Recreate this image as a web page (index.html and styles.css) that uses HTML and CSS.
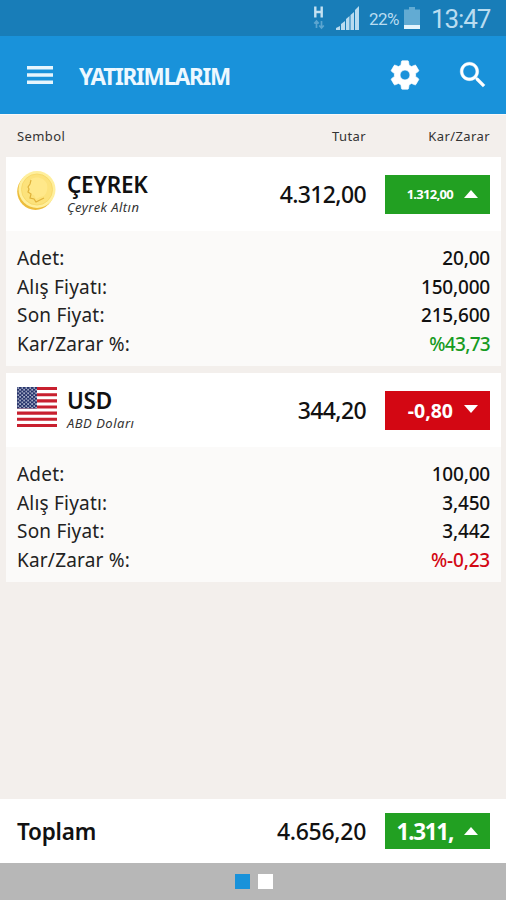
FILE: index.html
```html
<!DOCTYPE html>
<html lang="tr">
<head>
    <meta charset="UTF-8">
    <title>Yatırımlarım</title>
    <link rel="stylesheet" href="styles.css">
</head>
<body>
    <div class="status">
        <svg class="network" width="12" height="24" viewBox="0 0 12 24">
            <path d="M2.300 .5v11M8.700 .5v11M2.300 6h6.400" fill="none" stroke="#c3e1f2" stroke-width="2.400"/>
            <path d="M3.500 22v-7M1.200 17.500l2.300-2.500 2.300 2.500M8.500 15v7M6.200 19.500l2.300 2.500 2.300-2.500" fill="none" stroke="#5ba5d0" stroke-width="1.700"/>
        </svg>
        <svg class="signal" width="23" height="24" viewBox="0 0 23 24">
            <path d="M0 24v-2l4-2v4zM5 24v-6l4-3v9zM10 24V13l3.500-3v14zM14.500 24V9L18 6v18zM19 24V4l4-4v24z" fill="#b9dbef"/>
        </svg>
        <span class="percent">22%</span>
        <svg class="battery" width="16" height="22" viewBox="0 0 16 22">
            <path d="M0 2.500h5V0h6v2.500h5V18H0z" fill="#62abd3"/>
            <path d="M0 18h16v4H0z" fill="#e4f4fc"/>
        </svg>
        <span class="clock">13:47</span>
    </div>

    <div class="toolbar">
        <svg class="menu" width="26" height="18" viewBox="0 0 26 18">
            <path d="M0 1.700h26M0 9h26M0 16.300h26" stroke="#e6f5fd" stroke-width="3.400"/>
        </svg>
        <h1>YATIRIMLARIM</h1>
        <svg class="gear" width="34" height="34" viewBox="0 0 24 24" fill="#fff" stroke="#fff" stroke-width=".5">
            <path d="M19.430 12.980c.04-.32.07-.64.07-.98s-.03-.66-.07-.98l2.110-1.650c.19-.15.24-.42.12-.64l-2-3.460c-.12-.22-.39-.3-.61-.22l-2.490 1c-.52-.4-1.080-.73-1.690-.98l-.38-2.650C14.460 2.180 14.250 2 14 2h-4c-.25 0-.46.18-.49.42l-.38 2.650c-.61.25-1.170.59-1.690.98l-2.490-1c-.23-.09-.49 0-.61.22l-2 3.460c-.13.22-.07.49.12.64l2.110 1.650c-.04.32-.07.65-.07.98s.03.66.07.98l-2.110 1.650c-.19.15-.24.42-.12.64l2 3.460c.12.22.39.3.61.22l2.490-1c.52.4 1.080.73 1.690.98l.38 2.650c.03.24.24.42.49.42h4c.25 0 .46-.18.49-.42l.38-2.650c.61-.25 1.170-.59 1.690-.98l2.490 1c.23.09.49 0 .61-.22l2-3.460c.12-.22.07-.49-.12-.64l-2.110-1.650zM12 15.500c-1.930 0-3.500-1.570-3.500-3.500s1.570-3.500 3.500-3.500 3.500 1.570 3.500 3.500-1.570 3.500-3.500 3.500z"/>
        </svg>
        <svg class="search" width="34" height="34" viewBox="0 0 24 24" fill="#fff" stroke="#fff" stroke-width=".3">
            <path d="M15.500 14h-.79l-.28-.27C15.410 12.590 16 11.110 16 9.500 16 5.910 13.090 3 9.500 3S3 5.910 3 9.500 5.910 16 9.500 16c1.610 0 3.090-.59 4.230-1.570l.27.28v.79l5 4.990L20.490 19l-4.990-5zm-6 0C7.010 14 5 11.990 5 9.500S7.010 5 9.500 5 14 7.010 14 9.500 11.990 14 9.500 14z"/>
        </svg>
    </div>

    <div class="columns">
        <span class="col-name">Sembol</span>
        <span class="col-amount">Tutar</span>
        <span class="col-profit">Kar/Zarar</span>
    </div>

    <div class="card">
        <div class="card-head">
            <svg class="icon" width="40" height="40" viewBox="0 0 40 40">
                <ellipse cx="18.500" cy="20.500" rx="18.300" ry="18.500" fill="#edbd3c"/>
                <circle cx="20" cy="18.500" r="18.500" fill="#ffef9c"/>
                <circle cx="20" cy="18.500" r="15.500" fill="#fce27b" stroke="#f8da6c"/>
                <path d="M14 8c5-3 13-2 16 5 1 5 0 9-3 12l-4 1-4 2-2-4-5-1 1-4-3-2 2-3z" fill="#ffe88a"/>
                <path d="M14 9l-1 4-2 3 1 2-1 3 3 2-1 4 4 1 2 3 4-2 4-2" fill="none" stroke="#e0b23a" stroke-width="1.200"/>
            </svg>
            <div class="name">
                <h2 class="symbol">ÇEYREK</h2>
                <p class="sub sub-gold">Çeyrek Altın</p>
            </div>
            <span class="amount">4.312,00</span>
            <div class="badge up"><span class="small">1.312,00</span><i class="arrow-up"></i></div>
        </div>
        <div class="details">
            <div class="row"><span>Adet:</span><b>20,00</b></div>
            <div class="row"><span>Alış Fiyatı:</span><b>150,000</b></div>
            <div class="row"><span>Son Fiyat:</span><b>215,600</b></div>
            <div class="row"><span>Kar/Zarar %:</span><b class="gain">%43,73</b></div>
        </div>
    </div>

    <div class="card">
        <div class="card-head">
            <svg class="icon" width="40" height="40" viewBox="0 0 40 40">
                <defs>
                    <pattern id="stars" width="4" height="3.600" patternUnits="userSpaceOnUse">
                        <circle cx="1.200" cy="1" r=".85" fill="#cfd4e4"/>
                        <circle cx="3.100" cy="2.700" r=".85" fill="#cfd4e4"/>
                    </pattern>
                </defs>
                <path d="M0 0h40v40H0z" fill="#fff"/>
                <path d="M0 1.540h40M0 7.690h40M0 13.850h40M0 20h40M0 26.150h40M0 32.310h40M0 38.460h40" stroke="#c8202f" stroke-width="3.080"/>
                <path d="M0 0h20v21.500H0z" fill="#27346b"/>
                <path d="M0 0h20v21.500H0z" fill="url(#stars)"/>
            </svg>
            <div class="name">
                <h2 class="symbol">USD</h2>
                <p class="sub">ABD Doları</p>
            </div>
            <span class="amount">344,20</span>
            <div class="badge down"><span class="medium">-0,80</span><i class="arrow-down"></i></div>
        </div>
        <div class="details">
            <div class="row"><span>Adet:</span><b>100,00</b></div>
            <div class="row"><span>Alış Fiyatı:</span><b>3,450</b></div>
            <div class="row"><span>Son Fiyat:</span><b>3,442</b></div>
            <div class="row"><span>Kar/Zarar %:</span><b class="loss">%-0,23</b></div>
        </div>
    </div>

    <div class="total">
        <span class="total-label">Toplam</span>
        <span class="amount">4.656,20</span>
        <div class="badge up"><span class="large">1.311,</span><i class="arrow-up"></i></div>
    </div>

    <div class="pager">
        <span class="dot active"></span>
        <span class="dot"></span>
    </div>
</body>
</html>
```
FILE: styles.css
```css
* {
    box-sizing: border-box;
}

body {
    display: flex;
    flex-direction: column;
    height: 900px;
    margin: 0;
    background-color: #f3efec;
    color: #111;
    font-family: "Noto Sans", sans-serif;
    overflow: hidden;
}

h1, h2, p {
    margin: 0;
}

svg {
    display: block;
    flex-shrink: 0;
}

.status {
    display: flex;
    align-items: center;
    justify-content: flex-end;
    height: 36px;
    padding-right: 15px;
    background-color: #187db8;
    color: #b9dcf0;
    font-family: Roboto, sans-serif;
}

.network {
    margin-right: 11px;
}

.percent {
    width: 31px;
    margin: 2px 4px 0 10px;
    font-size: 17px;
    letter-spacing: -0.5px;
}

.clock {
    width: 60px;
    margin: 2px 0 0 11px;
    font-size: 26px;
    letter-spacing: -1.1px;
}

.toolbar {
    display: flex;
    align-items: center;
    height: 78px;
    padding: 0 16px 0 27px;
    background-color: #1992da;
}

h1 {
    flex: 1;
    margin: 2px 0 0 26px;
    color: #edf8ff;
    font-size: 22.5px;
    font-weight: 700;
    letter-spacing: -1.25px;
}

.search {
    margin-left: 34px;
}

.columns {
    display: flex;
    align-items: center;
    height: 43px;
    padding: 0 16px 0 17px;
    border-top: 1px solid #faf8f7;
    color: #333;
    font-size: 13px;
    letter-spacing: 0.4px;
}

.col-name {
    flex: 1;
}

.col-profit {
    width: 124px;
    text-align: right;
}

.card {
    height: 209px;
    margin: 0 5px 7px 6px;
    background-color: #fbfaf9;
}

.card-head {
    display: flex;
    align-items: center;
    height: 74px;
    padding: 0 11px;
    background-color: #fff;
}

.icon {
    align-self: flex-start;
    margin-top: 14px;
}

.name {
    flex: 1;
    margin-left: 10px;
}

.symbol {
    font-size: 22.5px;
    font-weight: 600;
    letter-spacing: -0.25px;
    line-height: 27px;
}

.sub {
    color: #333;
    font-size: 13px;
    font-style: italic;
    letter-spacing: 0.5px;
    line-height: 19px;
}

.sub-gold {
    letter-spacing: 0.45px;
}

.amount {
    margin-right: 19px;
    font-size: 23px;
    font-weight: 500;
    letter-spacing: -0.65px;
}

.badge {
    display: flex;
    align-items: center;
    justify-content: flex-end;
    width: 105px;
    height: 39px;
    padding-right: 12px;
    color: #fff;
    font-weight: 700;
}

.up {
    background-color: #22a022;
}

.down {
    background-color: #d30713;
}

.badge span {
    margin-right: 11px;
}

.small {
    font-size: 13px;
    letter-spacing: -0.7px;
}

.medium {
    font-size: 19.5px;
}

.large {
    font-size: 22.5px;
    letter-spacing: -1.3px;
}

.arrow-up, .arrow-down {
    border-left: 7px solid transparent;
    border-right: 7px solid transparent;
}

.arrow-up {
    border-bottom: 8px solid #fff;
}

.arrow-down {
    margin-bottom: 2px;
    border-top: 8px solid #fff;
}

.details {
    padding: 13px 11px 0;
}

.row {
    display: flex;
    justify-content: space-between;
    height: 28.6px;
    color: #222;
    font-size: 19px;
    letter-spacing: 0.2px;
    line-height: 28.6px;
}

.row b {
    color: #111;
    font-weight: 500;
    letter-spacing: -0.2px;
}

.row .gain {
    color: #179b22;
    letter-spacing: -0.7px;
}

.row .loss {
    color: #d30713;
}

.total {
    display: flex;
    align-items: center;
    height: 64px;
    margin-top: auto;
    padding: 0 16px 0 17px;
    background-color: #fff;
}

.total .badge {
    height: 36px;
}

.total .amount {
    letter-spacing: -0.3px;
}

.total-label {
    flex: 1;
    font-size: 22.5px;
    font-weight: 600;
    letter-spacing: -0.2px;
}

.pager {
    display: flex;
    align-items: center;
    justify-content: center;
    gap: 8px;
    height: 37px;
    padding-left: 1px;
    background-color: #b7b7b7;
}

.dot {
    width: 15px;
    height: 15px;
    background-color: #fff;
}

.active {
    background-color: #1992da;
}
```
